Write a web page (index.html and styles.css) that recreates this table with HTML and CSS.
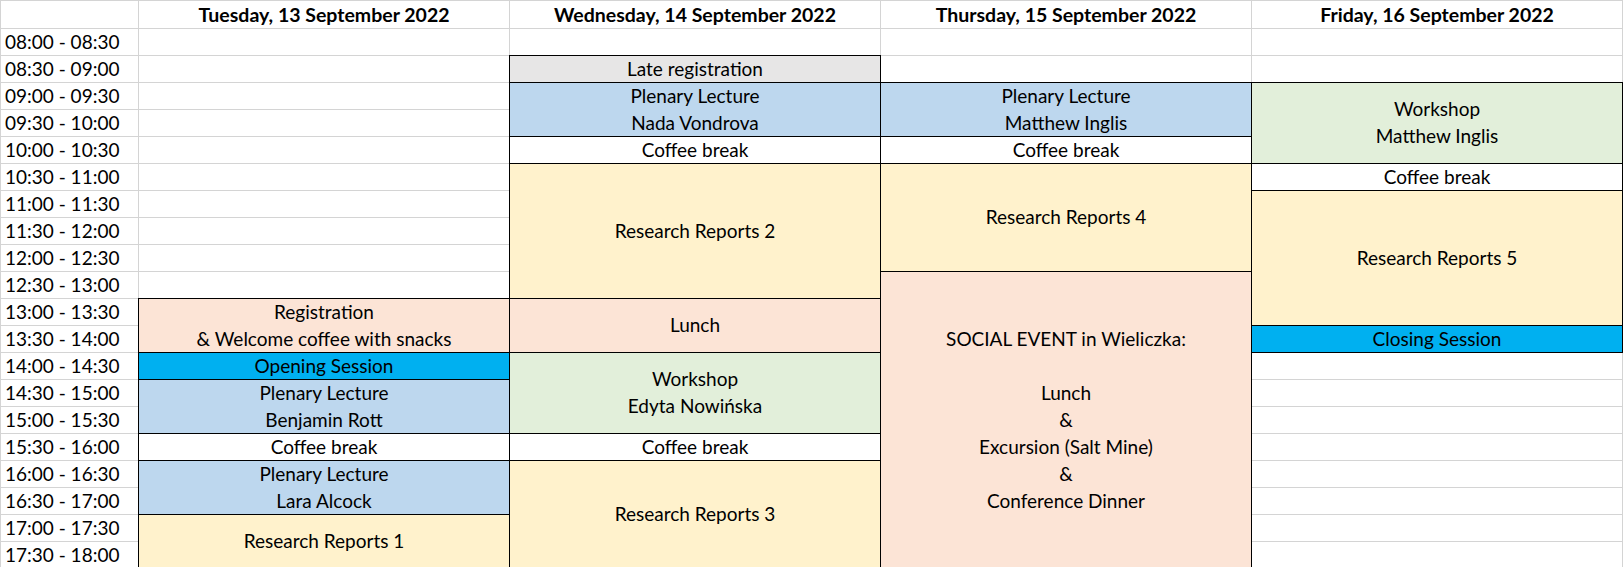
FILE: index.html
```html
<!doctype html>
<html lang="en">
<head>
	<meta charset="UTF-8">
	<title>Conference programme</title>
	<link rel="stylesheet" href="styles.css">
</head>
<body>
	<div class="sheet">
		<!-- header -->
		<div class="c"></div>
		<div class="c head">Tuesday, 13 September 2022</div>
		<div class="c head">Wednesday, 14 September 2022</div>
		<div class="c head">Thursday, 15 September 2022</div>
		<div class="c head">Friday, 16 September 2022</div>

		<!-- 08:00 -->
		<div class="c time">08:00 - 08:30</div>
		<div class="c"></div>
		<div class="c"></div>
		<div class="c"></div>
		<div class="c"></div>

		<!-- 08:30 -->
		<div class="c time">08:30 - 09:00</div>
		<div class="c"></div>
		<div class="c ev grey">Late registration</div>
		<div class="c"></div>
		<div class="c"></div>

		<!-- 09:00 -->
		<div class="c time">09:00 - 09:30</div>
		<div class="c"></div>
		<div class="c ev blue span2">Plenary Lecture<br>Nada Vondrova</div>
		<div class="c ev blue span2">Plenary Lecture<br>Matthew Inglis</div>
		<div class="c ev green span3">Workshop<br>Matthew Inglis</div>

		<!-- 09:30 -->
		<div class="c time">09:30 - 10:00</div>
		<div class="c"></div>

		<!-- 10:00 -->
		<div class="c time">10:00 - 10:30</div>
		<div class="c"></div>
		<div class="c ev">Coffee break</div>
		<div class="c ev">Coffee break</div>

		<!-- 10:30 -->
		<div class="c time">10:30 - 11:00</div>
		<div class="c"></div>
		<div class="c ev yellow span5">Research Reports 2</div>
		<div class="c ev yellow span4">Research Reports 4</div>
		<div class="c ev">Coffee break</div>

		<!-- 11:00 -->
		<div class="c time">11:00 - 11:30</div>
		<div class="c"></div>
		<div class="c ev yellow span5">Research Reports 5</div>

		<!-- 11:30 -->
		<div class="c time">11:30 - 12:00</div>
		<div class="c"></div>

		<!-- 12:00 -->
		<div class="c time">12:00 - 12:30</div>
		<div class="c"></div>

		<!-- 12:30 -->
		<div class="c time">12:30 - 13:00</div>
		<div class="c"></div>
		<div class="c ev peach span11">SOCIAL EVENT in Wieliczka:<br><br>Lunch<br>&amp;<br>Excursion (Salt Mine)<br>&amp;<br>Conference Dinner</div>

		<!-- 13:00 -->
		<div class="c time">13:00 - 13:30</div>
		<div class="c ev peach span2">Registration<br>&amp; Welcome coffee with snacks</div>
		<div class="c ev peach span2">Lunch</div>

		<!-- 13:30 -->
		<div class="c time">13:30 - 14:00</div>
		<div class="c ev session">Closing Session</div>

		<!-- 14:00 -->
		<div class="c time">14:00 - 14:30</div>
		<div class="c ev session">Opening Session</div>
		<div class="c ev green span3">Workshop<br>Edyta Nowińska</div>
		<div class="c"></div>

		<!-- 14:30 -->
		<div class="c time">14:30 - 15:00</div>
		<div class="c ev blue span2">Plenary Lecture<br>Benjamin Rott</div>
		<div class="c"></div>

		<!-- 15:00 -->
		<div class="c time">15:00 - 15:30</div>
		<div class="c"></div>

		<!-- 15:30 -->
		<div class="c time">15:30 - 16:00</div>
		<div class="c ev">Coffee break</div>
		<div class="c ev">Coffee break</div>
		<div class="c"></div>

		<!-- 16:00 -->
		<div class="c time">16:00 - 16:30</div>
		<div class="c ev blue span2">Plenary Lecture<br>Lara Alcock</div>
		<div class="c ev yellow span4">Research Reports 3</div>
		<div class="c"></div>

		<!-- 16:30 -->
		<div class="c time">16:30 - 17:00</div>
		<div class="c"></div>

		<!-- 17:00 -->
		<div class="c time">17:00 - 17:30</div>
		<div class="c ev yellow span2">Research Reports 1</div>
		<div class="c"></div>

		<!-- 17:30 -->
		<div class="c time">17:30 - 18:00</div>
		<div class="c"></div>
	</div>
</body>
</html>
```

FILE: styles.css
```css
html,body{margin:0;overflow:hidden;background:#fff;}
body{font-family:Lato,"Open Sans",sans-serif;font-size:19px;color:#000;}

/* spreadsheet grid, cells overlap by 1px so borders collapse */
.sheet{display:grid;grid-template-columns:138px repeat(4,371px);grid-template-rows:28px repeat(20,27px);padding:1px 0 0 1px;}
.c{display:flex;align-items:center;justify-content:center;text-align:center;margin:-1px 0 0 -1px;padding-bottom:2px;border:1px solid #d4d4d4;line-height:27px;white-space:nowrap;overflow:hidden;}
.head{font-weight:bold;font-size:19.5px;padding-bottom:0;}
.time{justify-content:flex-start;padding-left:4px;}

.ev{border-color:#000;z-index:1;background:#fff;}
.grey{background:#e7e6e6;}
.blue{background:#bdd7ee;}
.green{background:#e2efda;}
.yellow{background:#fff2cc;}
.peach{background:#fce4d6;}
.session{background:#00b0f0;}

.span2{grid-row:span 2;}
.span3{grid-row:span 3;}
.span4{grid-row:span 4;}
.span5{grid-row:span 5;}
.span11{grid-row:span 11;}
```
